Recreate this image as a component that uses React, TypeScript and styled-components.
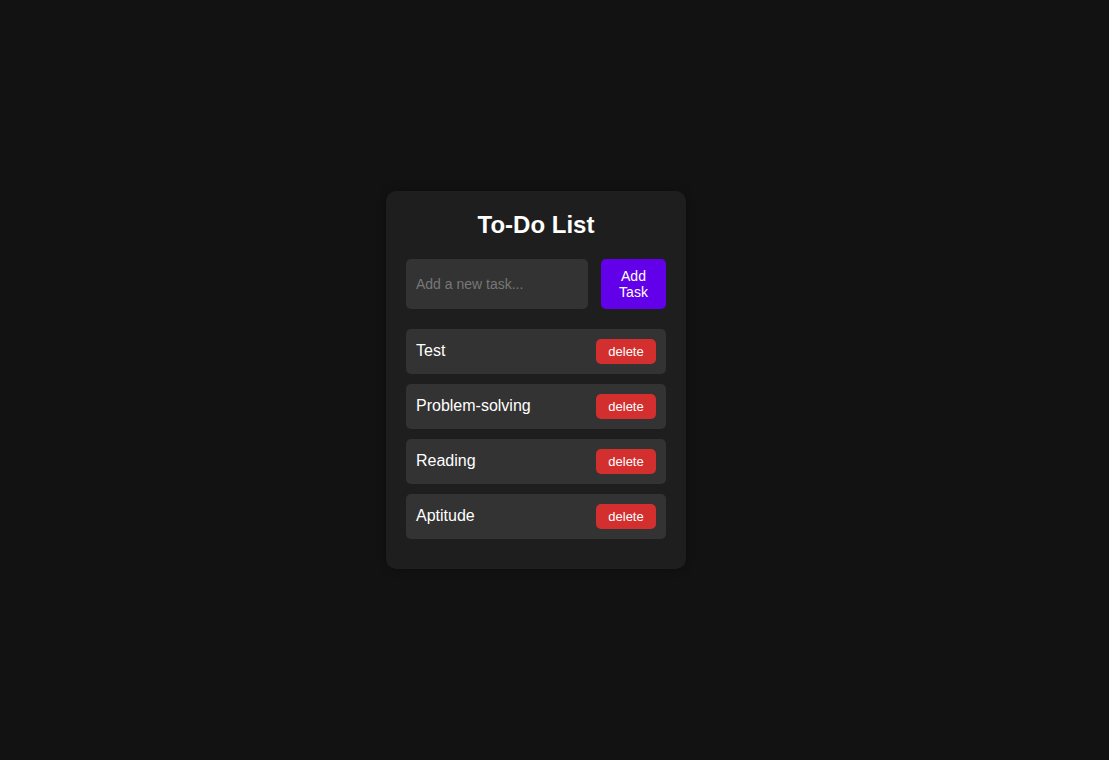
import React, { useState } from "react";
import styled, { createGlobalStyle } from "styled-components";

const Global = createGlobalStyle`
  html, body { margin: 0; padding: 0; background: #121212; }
  body { font-family: "Liberation Sans", Arial, sans-serif; color: #fff; }
`;

const Page = styled.div`
  min-height: 760px;
  display: flex;
  align-items: center;
  justify-content: center;
  padding-right: 37px;
  box-sizing: border-box;
`;

const Card = styled.div`
  width: 300px;
  box-sizing: border-box;
  background: #1e1e1e;
  border-radius: 10px;
  padding: 20px;
  box-shadow: 0 0 10px rgba(0, 0, 0, 0.3);
`;

const Title = styled.h2`
  margin: 0 0 20px;
  text-align: center;
  font-size: 24px;
  line-height: 28px;
  font-weight: bold;
  color: #fff;
`;

const InputRow = styled.div`
  display: flex;
  gap: 13px;
  margin-bottom: 20px;
`;

const TaskInput = styled.input`
  flex: 1;
  min-width: 0;
  height: 50px;
  box-sizing: border-box;
  padding: 10px;
  border: none;
  border-radius: 5px;
  background: #333;
  color: #fff;
  font-family: "Liberation Sans", Arial, sans-serif;
  font-size: 14px;
  outline: none;
  &::placeholder { color: #777; }
`;

const AddButton = styled.button`
  width: 65px;
  height: 50px;
  border: none;
  border-radius: 5px;
  background: #6200ea;
  color: #fff;
  font-family: "Liberation Sans", Arial, sans-serif;
  font-size: 14px;
  line-height: 16px;
  padding: 0 10px;
  cursor: pointer;
`;

const List = styled.ul`
  list-style: none;
  margin: 0 0 10px;
  padding: 0;
  display: flex;
  flex-direction: column;
  gap: 10px;
`;

const Item = styled.li`
  display: flex;
  align-items: center;
  justify-content: space-between;
  height: 45px;
  box-sizing: border-box;
  padding: 0 10px 1px;
  background: #333;
  border-radius: 5px;
  font-size: 16px;
  color: #fff;
`;

const DeleteButton = styled.button`
  width: 60px;
  height: 25px;
  border: none;
  border-radius: 5px;
  background: #d32f2f;
  color: #fff;
  font-family: "Liberation Sans", Arial, sans-serif;
  font-size: 13px;
  padding: 0;
  cursor: pointer;
`;

export default function App() {
  const [tasks, setTasks] = useState(["Test", "Problem-solving", "Reading", "Aptitude"]);
  const [text, setText] = useState("");
  return (
    <>
      <Global />
      <Page>
        <Card>
          <Title>To-Do List</Title>
          <InputRow>
            <TaskInput
              placeholder="Add a new task..."
              value={text}
              onChange={(e) => setText(e.target.value)}
            />
            <AddButton
              onClick={() => {
                if (text.trim()) {
                  setTasks([...tasks, text.trim()]);
                  setText("");
                }
              }}
            >
              Add Task
            </AddButton>
          </InputRow>
          <List>
            {tasks.map((t, i) => (
              <Item key={i}>
                <span>{t}</span>
                <DeleteButton onClick={() => setTasks(tasks.filter((_, j) => j !== i))}>delete</DeleteButton>
              </Item>
            ))}
          </List>
        </Card>
      </Page>
    </>
  );
}
